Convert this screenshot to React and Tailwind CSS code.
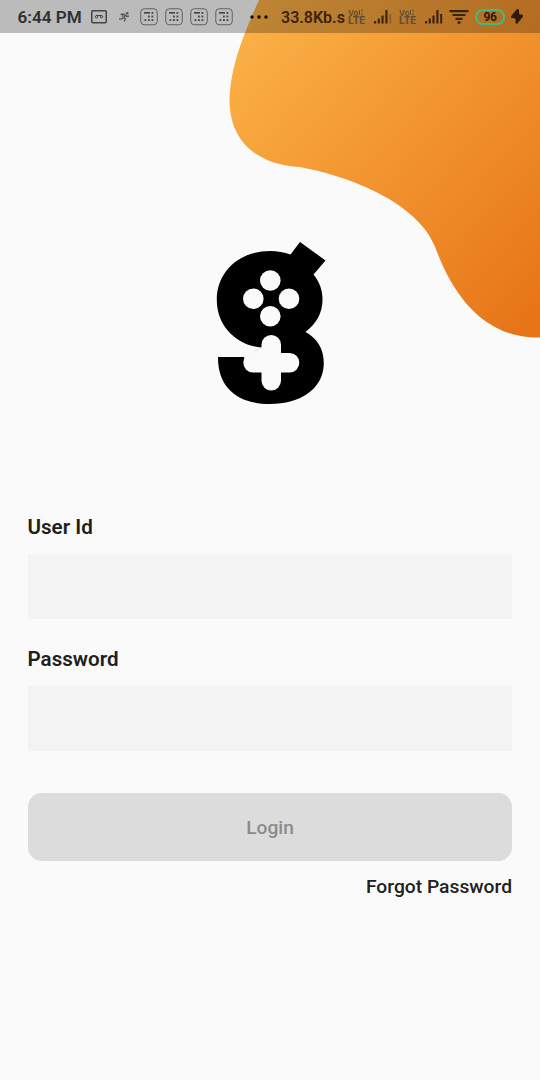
import React from "react";

function Blob() {
  return (
    <svg className="pointer-events-none absolute top-0 right-0 h-[340px] w-[320px]" viewBox="220 0 320 340" aria-hidden="true">
      <defs>
        <linearGradient id="blob" gradientUnits="userSpaceOnUse" x1="240" y1="40" x2="540" y2="310">
          <stop offset="0" stopColor="#fbb046" />
          <stop offset="1" stopColor="#e77517" />
        </linearGradient>
      </defs>
      <path
        d="M259 0C246 29 230 65 229.500 101C230 142 258 165 300 167C362 179 421 208 435.500 248C453 296 485 339 540 337.500V0Z"
        fill="url(#blob)"
      />
    </svg>
  );
}

function Logo() {
  return (
    <svg className="h-[164px] w-[110px]" viewBox="216 241 110 164" role="img">
      <path
        d="M300 242L325.500 260.500L313.500 274.500C319.500 282 322.500 290 322.500 300C322.500 313 316 324 305.500 332C317 338 323.800 349 323.800 363C323.800 389 300 404 270 404C238 404 217.800 388 218 357H245L261.500 347.600C235 345 216.800 325 216.800 300C216.800 271 240 251 270 251Q281 251 290.500 254.500Z"
        fill="#000"
      />
      <g fill="#fafafa">
        <circle cx="270.300" cy="280.500" r="10.300" />
        <circle cx="253.300" cy="298.700" r="10.300" />
        <circle cx="289" cy="298.700" r="10.300" />
        <circle cx="270.300" cy="316.300" r="10.300" />
        <rect x="261.500" y="335" width="19.500" height="55.500" rx="9.750" />
        <rect x="243.300" y="353" width="56" height="19.500" rx="9.750" />
        <path d="M244 357L262 347V358H244Z" />
      </g>
    </svg>
  );
}

function RecordIcon() {
  return (
    <svg className="ml-[9px] h-[14px] w-4 shrink-0" viewBox="0 0 16 14" fill="none" stroke="#444">
      <rect x=".75" y=".75" width="14.500" height="12" rx="1" strokeWidth="1.500" />
      <circle cx="5.500" cy="6.800" r="1.200" />
      <circle cx="10.500" cy="6.800" r="1.200" />
      <path d="M5 5.500h6" />
    </svg>
  );
}

function RunnerIcon() {
  return (
    <svg className="ml-[11px] h-3 w-3 shrink-0" viewBox="0 0 12 12" fill="none" stroke="#555" strokeWidth="1.300">
      <circle cx="9.200" cy="2.200" r="1.300" fill="#555" stroke="none" />
      <path d="M2.500 3.700L5 3L7.500 4.200L5.700 6.500L7.500 8L6 10.500M5.700 6.500L4 7.800H1M7.500 4.200L9 5.500L11 5M5.500 3L4 5.800" />
    </svg>
  );
}

function PadIcon() {
  return (
    <svg className="h-[18px] w-[18px] shrink-0" viewBox="0 0 18 18">
      <rect x=".75" y=".75" width="16.500" height="16" rx="3.500" fill="none" stroke="#606060" />
      <g fill="#444">
        <rect x="4" y="4" width="6" height="1.600" />
        <rect x="11.500" y="4" width="1.800" height="1.800" />
        <rect x="8" y="7.600" width="1.800" height="1.800" />
        <rect x="11.500" y="7.600" width="1.800" height="1.800" />
        <rect x="4.500" y="11.200" width="1.800" height="1.800" />
        <rect x="8" y="11.200" width="1.800" height="1.800" />
        <rect x="11.500" y="11.200" width="1.800" height="1.800" />
      </g>
    </svg>
  );
}

function Volte() {
  return (
    <div className="flex h-4 w-[18px] shrink-0 flex-col font-[Inter,sans-serif] text-[#655036]">
      <span className="flex h-2 items-center text-[8px] leading-[8px] font-bold whitespace-nowrap">
        Vo
        <svg className="h-[7px] w-[5px]" viewBox="0 0 5 7" fill="none" stroke="currentColor">
          <path d="M1.500 1v5M4 .2v2.500M4 4v2.800" />
        </svg>
      </span>
      <span className="h-2 text-[9.800px] leading-[8px] font-extrabold">LTE</span>
    </div>
  );
}

function Signal({ weak }) {
  return (
    <svg className="h-[14px] w-[18px] shrink-0" viewBox="0 0 18 14" fill="#3c230b">
      <rect x="0" y="11" width="2.200" height="2.500" rx=".5" />
      <rect x="3.700" y="8.500" width="2.200" height="5" rx=".5" />
      <rect x="7.400" y="5.500" width="2.200" height="8" rx=".5" />
      <rect x="11.300" y="0" width="2.200" height="13.500" rx=".5" />
      <rect x="15.200" y="4" width="2" height="9.500" rx=".5" opacity={weak ? 0.3 : 1} />
    </svg>
  );
}

function StatusBar() {
  return (
    <header className="relative flex h-[33px] items-center bg-black/25 pl-[17.500px] text-[#303030]">
      <span className="w-[64.500px] shrink-0 pt-px text-[17.100px] leading-5 font-semibold whitespace-nowrap">6:44 PM</span>
      <RecordIcon />
      <RunnerIcon />
      <div className="ml-[10px] flex gap-[7px]">
        <PadIcon />
        <PadIcon />
        <PadIcon />
        <PadIcon />
      </div>
      <svg className="ml-[17px] h-1 w-[18px] shrink-0" viewBox="0 0 18 4" fill="#120b04">
        <circle cx="2" cy="2" r="1.700" />
        <circle cx="9" cy="2" r="1.700" />
        <circle cx="16" cy="2" r="1.700" />
      </svg>
      <span className="ml-[13px] w-[67px] shrink-0 pt-[2px] text-[16px] leading-5 font-semibold whitespace-nowrap text-[#3c230b]">33.8Kb.s</span>
      <Volte />
      <div className="ml-2 flex"><Signal weak /></div>
      <div className="ml-[7px] flex"><Volte /></div>
      <div className="ml-2 flex"><Signal /></div>
      <svg className="ml-[6px] h-[14px] w-[20px] shrink-0" viewBox="0 0 20 14" fill="none" stroke="#3c230b" strokeWidth="2.200">
        <path d="M.5 1.100H19.500M3.500 5H16.500M6.500 8.900H13.500" />
        <circle cx="10" cy="12.500" r="1.500" fill="#3c230b" stroke="none" />
      </svg>
      <div className="ml-[6px] flex h-[16px] w-[30px] shrink-0 items-center justify-center rounded-full border-[2.500px] border-[#42ba7b] text-[12px] leading-none font-bold tracking-[-0.300px] text-[#2d1a08]">96</div>
      <svg className="ml-[6px] h-[15px] w-3 shrink-0" viewBox="0 0 12 15" fill="#301b08">
        <path d="M6 0L8 .5V5L12 6V7.500L6 15L4.500 14V9.800L0 8.500V7.200Z" />
      </svg>
    </header>
  );
}

function Field({ id, label, type, autoComplete }) {
  return (
    <div className="flex flex-col">
      <label htmlFor={id} className="-ml-[0.500px] text-[20.600px] leading-6 font-semibold">{label}</label>
      <input id={id} type={type} autoComplete={autoComplete} className="mt-[15px] h-[65px] w-full bg-[#f3f3f3] px-4 text-xl outline-none" />
    </div>
  );
}

export default function App() {
  return (
    <div className="relative flex h-[1080px] w-[540px] flex-col overflow-hidden bg-[#fafafa] font-[Roboto,sans-serif] text-[#202020]">
      <Blob />
      <StatusBar />
      <main className="relative flex flex-col px-7 pt-[208px]">
        <div className="flex justify-center pl-[2px]"><Logo /></div>
        <form className="mt-[110px] flex flex-col" onSubmit={(e) => e.preventDefault()}>
          <div className="flex flex-col gap-7">
            <Field id="user" label="User Id" type="text" autoComplete="username" />
            <Field id="password" label="Password" type="password" autoComplete="current-password" />
          </div>
          <button type="submit" disabled className="mt-[42px] h-[68px] rounded-[14px] bg-[#dcdcdc] pt-[2px] text-[19.200px] font-medium text-[#8b8b8b]">Login</button>
          <a href="#" className="mt-[14px] self-end text-[19.250px] leading-6 font-medium">Forgot Password</a>
        </form>
      </main>
    </div>
  );
}
